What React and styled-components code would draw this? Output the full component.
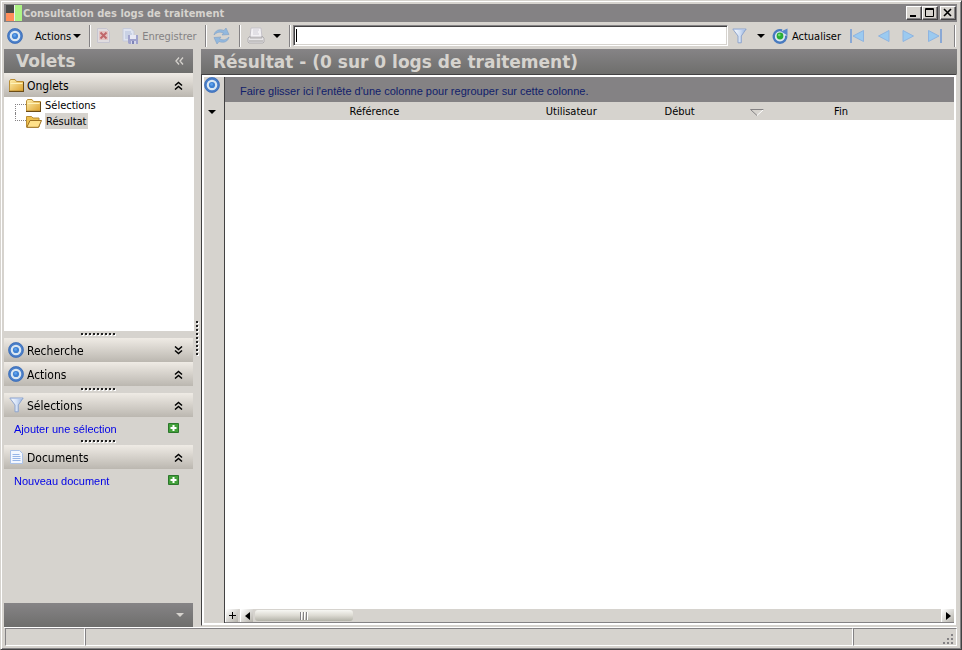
import React, { useState } from "react";
import styled, { createGlobalStyle } from "styled-components";

const GlobalStyle = createGlobalStyle`
    * {
        box-sizing: border-box;
    }
    body {
        margin: 0;
        background: #d6d3ce;
        color: #000;
        font-family: "DejaVu Sans Condensed", "DejaVu Sans", sans-serif;
        font-size: 11px;
        line-height: 14px;
    }
    button, input {
        font: inherit;
        color: inherit;
    }
`;

const Window = styled.div`
    display: flex;
    flex-direction: column;
    min-height: 100vh;
    border: 1px solid;
    border-color: #d6d3ce #424142 #424142 #d6d3ce;
    box-shadow: inset 1px 1px #fff, inset -1px -1px #848284;
    padding: 3px 4px 3px 3px;
`;

const TitleBar = styled.header`
    display: flex;
    align-items: center;
    height: 18px;
    padding: 0 1px 0 2px;
    background: #848284;
    color: #d6d3ce;
`;

const Title = styled.h1`
    flex: 1;
    margin: 0 0 0 1px;
    padding-top: 2px;
    font-size: 11px;
    font-weight: bold;
    white-space: nowrap;
`;

const WindowButton = styled.button`
    display: flex;
    width: 16px;
    height: 14px;
    margin-left: ${(props) => (props.$spaced ? "2px" : "0")};
    padding: 0;
    border: 1px solid;
    border-color: #fff #424142 #424142 #fff;
    box-shadow: inset -1px -1px #848284;
    background: #d6d3ce;
`;

const ToolBar = styled.div`
    display: flex;
    align-items: center;
    height: 27px;
    padding: 0 1px 0 3px;
`;

const ToolButton = styled.button`
    display: flex;
    align-items: center;
    flex: none;
    gap: ${(props) => props.$gap || 4}px;
    height: 22px;
    margin-left: ${(props) => props.$before || 0}px;
    padding: 0;
    border: 0;
    background: none;
    white-space: nowrap;

    &:disabled {
        color: #848284;
    }
`;

const ToolLabel = styled.span`
    padding-top: 2px;
`;

const Separator = styled.span`
    flex: none;
    width: 2px;
    height: 22px;
    margin: 0 ${(props) => props.$after ?? 6}px 0 ${(props) => props.$before || 8}px;
    border-left: 1px solid #848284;
    border-right: 1px solid #fff;
`;

const SearchInput = styled.input`
    flex: 1;
    min-width: 0;
    height: 21px;
    margin: 0 4px 1px 0;
    padding: 0 2px;
    border: 1px solid;
    border-color: #848284 #fff #fff #848284;
    box-shadow: inset 1px 1px #424142, inset -1px -1px #d6d3ce;
    background: #fff;
    outline: none;

    &:focus {
        caret-color: ${(props) => (props.$empty ? "transparent" : "#000")};
        background: #fff linear-gradient(#000, #000) no-repeat 2px 3px / ${(props) => (props.$empty ? "1px" : "0")} 13px;
    }
`;

const Body = styled.div`
    display: flex;
    flex: 1;
`;

const Sidebar = styled.aside`
    display: flex;
    flex-direction: column;
    flex: none;
    width: 189px;
`;

const Banner = styled.div`
    display: flex;
    align-items: center;
    justify-content: space-between;
    flex: none;
    height: ${(props) => props.$height || 24}px;
    padding: 0 9px 0 12px;
    background: linear-gradient(#868486, #6e6e6c);
    color: #d6d3ce;
`;

const BannerTitle = styled.h2`
    margin: 0;
    font-family: "DejaVu Sans", sans-serif;
    font-size: 17px;
    line-height: 24px;
    white-space: nowrap;
`;

const PlainButton = styled.button`
    display: flex;
    align-items: center;
    justify-content: center;
    padding: 0;
    border: 0;
    background: none;
`;

const PaneHeader = styled.button`
    display: flex;
    align-items: center;
    flex: none;
    gap: 3px;
    width: 100%;
    height: 24px;
    padding: 0 10px 0 4px;
    border: 0;
    background: linear-gradient(#efebe5, #bbb7b0);
    font-size: 12px;
    text-align: left;
`;

const PaneIcon = styled.span`
    display: flex;
    justify-content: center;
    width: 16px;
`;

const PaneLabel = styled.span`
    flex: 1;
    padding-top: 2px;
`;

const Tree = styled.ul`
    height: 234px;
    width: 190px;
    margin: 0;
    padding: 0 0 0 11px;
    background: #fff;
    list-style: none;
`;

const TreeItem = styled.li`
    display: flex;
    align-items: center;
    height: 16px;
`;

const TreeLine = styled.span`
    align-self: flex-start;
    width: 11px;
    height: 8px;
    border-left: 1px dotted #848284;
    border-bottom: 1px dotted #848284;

    ${TreeItem}:first-child & {
        align-self: flex-end;
        height: 9px;
        border-top: 1px dotted #848284;
        border-bottom: 0;
    }
`;

const TreeLink = styled.a`
    margin-left: 3px;
    padding: 2px 2px 0 1px;
    background: ${(props) => (props.$selected ? "#d6d3ce" : "none")};
    color: #000;
    text-decoration: none;
`;

const Splitter = styled.div`
    display: flex;
    align-items: center;
    justify-content: center;
    flex: none;
    height: 7px;
`;

const SideSplitter = styled.div`
    display: flex;
    align-items: center;
    justify-content: center;
    flex: none;
    width: 8px;
`;

const ActionRow = styled.div`
    display: flex;
    align-items: center;
    justify-content: space-between;
    height: 21px;
    padding: 0 14px 0 10px;
`;

const ActionLink = styled.a`
    padding-top: 2px;
    color: #0000e6;
    font-family: "Liberation Sans", Arial, sans-serif;
    text-decoration: none;
`;

const Spacer = styled.div`
    flex: 1;
`;

const Main = styled.main`
    display: flex;
    flex-direction: column;
    flex: 1;
    min-width: 0;
`;

const ResultFrame = styled.div`
    display: flex;
    flex: 1;
    padding: 2px;
    border: 1px solid;
    border-color: #424142 #d6d3ce #d6d3ce #424142;
    margin-bottom: 1px;
    background: #fff;
`;

const Gutter = styled.div`
    display: flex;
    flex-direction: column;
    align-items: center;
    flex: none;
    gap: 17px;
    width: 21px;
    padding: 0 4px 0 0;
    border-right: 1px solid #424142;
    background: #d6d3ce;
`;

const Grid = styled.div`
    display: flex;
    flex-direction: column;
    flex: 1;
    min-width: 0;
`;

const GroupPanel = styled.div`
    height: 25px;
    padding: 7px 15px 0;
    background: #848284;
    color: #10206b;
    font-family: "Liberation Sans", Arial, sans-serif;
    white-space: nowrap;
`;

const Table = styled.table`
    width: 100%;
    table-layout: fixed;
    border-collapse: collapse;
    background: #d6d3ce;
`;

const Th = styled.th`
    width: ${(props) => (props.$width ? props.$width + "%" : "auto")};
    height: 18px;
    padding: 2px 0 0;
    font-weight: normal;
    text-align: center;
`;

const ThContent = styled.div`
    display: flex;
    align-items: center;
    justify-content: flex-end;
    gap: 55px;
    padding-right: 8px;
`;

const ScrollBar = styled.div`
    display: flex;
    height: 14px;
    margin-top: auto;
    border-bottom: 1px solid #848284;
    background: #d6d3ce;
`;

const ScrollButton = styled(PlainButton)`
    flex: none;
    width: 13px;
    margin-left: ${(props) => (props.$spaced ? "2px" : "0")};
    border-left: 1px solid #fff;
    background: linear-gradient(135deg, #fff, #b5b2aa);
`;

const Thumb = styled.div`
    display: flex;
    align-items: center;
    justify-content: center;
    width: 98px;
    height: 11px;
    margin: 1px auto 0 2px;
    border-radius: 3px;
    background: linear-gradient(#f7f7f3, #dcdad2 50%, #b3b2a8);
`;

const StatusBar = styled.footer`
    display: flex;
    height: 19px;
    border-top: 1px solid #fff;
`;

const StatusCell = styled.div`
    display: flex;
    align-items: flex-end;
    justify-content: flex-end;
    flex: ${(props) => (props.$width ? "none" : "1")};
    width: ${(props) => (props.$width ? props.$width + "px" : "auto")};
    margin-left: ${(props) => (props.$first ? "1px" : "0")};
    padding-right: 2px;
    border: 1px solid;
    border-color: #848284 #fff #fff #848284;
`;

const Icon = styled.svg`
    display: block;
    flex: none;
`;

const Logo = () => (
    <Icon width="16" height="16" viewBox="0 0 16 16">
        <path d="M0 0h8v8H0z" fill="#484a48" />
        <path d="M0 8h8v8H0z" fill="#ff8e5a" />
        <path d="M9 0h7v16H9z" fill="#adf384" />
        <path d="M8.5 0v16" stroke="#eee" />
    </Icon>
);

const TargetIcon = () => (
    <Icon width="16" height="16" viewBox="0 0 16 16">
        <circle cx="8" cy="8" r="6.5" fill="#dbe7f1" stroke="#4a7fc9" strokeWidth="2.4" />
        <circle cx="8" cy="8" r="7.4" fill="none" stroke="#3765ad" strokeWidth=".6" />
        <circle cx="8" cy="8" r="3.1" fill="#3f81d2" />
        <circle cx="7.6" cy="7.4" r="1.4" fill="#5fa3ee" />
    </Icon>
);

const CaretDown = ({ color = "#000" }) => (
    <Icon width="8" height="4" viewBox="0 0 8 4">
        <path d="M0 0h8L4 4z" fill={color} />
    </Icon>
);

const DeleteIcon = () => (
    <Icon width="13" height="15" viewBox="0 0 13 15">
        <path d="M.5.5h9l3 3v11H.5z" fill="#e0dcdf" stroke="#c6c5d0" />
        <path d="M2 3h9v9H2z" fill="#e2c3c2" />
        <path d="m3.5 4.5 6 6m0-6-6 6" stroke="#c0676b" strokeWidth="2" />
    </Icon>
);

const SaveIcon = () => (
    <Icon width="16" height="16" viewBox="0 0 16 16">
        <path d="M1 .5h8l3 3V13H1z" fill="#dfe4f0" stroke="#c6cad9" />
        <path d="M3 4h6M3 6h7M3 8h6M3 10h4" stroke="#b3bfda" />
        <path d="M6 7h10v9H7l-1-1z" fill="#a0a3cc" />
        <path d="M8 7h6v4H8z" fill="#e8e9f4" />
        <path d="M9 13h5v3H9z" fill="#d4d6e8" />
        <path d="M10 13h2v3h-2z" fill="#7f84b6" />
    </Icon>
);

const RefreshIcon = () => (
    <Icon width="17" height="16" viewBox="0 0 17 16">
        <path d="M1 7C2 2.500 6 .5 11 2.500L13 0l3 6.500L9 7l1.500-2C7 3.500 4 4 1 7z" fill="#92b8de" stroke="#7f9fc4" strokeWidth=".6" />
        <path d="M16 9c-1 4.500-5 6.500-10 4.500L4 16 1 9.500 8 9l-1.500 2c3.500 1.500 6.500 1 9.500-2z" fill="#92b8de" stroke="#7f9fc4" strokeWidth=".6" />
    </Icon>
);

const PrinterIcon = () => (
    <Icon width="18" height="17" viewBox="0 0 18 17">
        <path d="M4 1h10l1 9H3z" fill="#f3f1f4" stroke="#c5c2c8" />
        <path d="M6 3h6M6 5h5M6 7h6" stroke="#d0ced6" />
        <path d="m3 9-2 2v4l1 1h14l1-1v-4l-2-2v2H3z" fill="#e8e6e8" stroke="#b0aeb0" />
        <path d="M2 13h14v2H2z" fill="#c4c2c2" />
    </Icon>
);

const FilterIcon = () => (
    <Icon width="15" height="16" viewBox="0 0 15 16">
        <defs>
            <linearGradient id="funnel">
                <stop offset="0" stopColor="#fff" />
                <stop offset=".5" stopColor="#d5e2f6" />
                <stop offset="1" stopColor="#93b0dc" />
            </linearGradient>
        </defs>
        <path d="M.8 1h13.400L9.300 8v6.800H6V8z" fill="url(#funnel)" stroke="#8fa5cd" />
        <path d="M2 1.500h11" stroke="#b2c4e6" />
    </Icon>
);

const ReloadIcon = () => (
    <Icon width="16" height="16" viewBox="0 0 16 16">
        <circle cx="8" cy="8.500" r="6.400" fill="#dbe7f1" />
        <path d="M10 2.500A6.300 6.300 0 1 0 14.200 7.500" fill="none" stroke="#487abf" strokeWidth="2.400" />
        <path d="m9 3.500 6.500-3V7.500z" fill="#5687ca" />
        <circle cx="8" cy="8" r="3.400" fill="#28ad35" />
        <circle cx="7.300" cy="7" r="1.300" fill="#76dc75" />
    </Icon>
);

const NavIcon = ({ flip, bar }) => (
    <Icon width={bar ? 16 : 13} height="14" viewBox={bar ? "0 0 16 14" : "0 0 13 14"}>
        <g transform={flip ? `translate(${bar ? 16 : 13} 0) scale(-1 1)` : undefined}>
            {bar && <path d="M2 0v14" stroke="#8aa8d4" strokeWidth="2" />}
            <path d={bar ? "M14.5 1.5v11L4 7z" : "M12 1.5v11L1.5 7z"} fill="#9bcaf0" stroke="#8fb4e0" />
        </g>
    </Icon>
);

const FolderIcon = () => (
    <Icon width="15" height="13" viewBox="0 0 15 13">
        <defs>
            <linearGradient id="folder" x2="1" y2="1">
                <stop offset="0" stopColor="#fff0ae" />
                <stop offset="1" stopColor="#dda12e" />
            </linearGradient>
        </defs>
        <path d="M.5 2 1.500.5h4.500L7.500 2.500h7v9.500H.5z" fill="url(#folder)" stroke="#b98d35" />
        <path d="M1.500 4.500h12" stroke="#fff2b9" />
        <path d="M0 12.500h15M14.500 3v10" stroke="#6b4c16" />
    </Icon>
);

const OpenFolderIcon = () => (
    <Icon width="16" height="13" viewBox="0 0 16 13">
        <path d="M.5 12V1.500h5L7 3h6v9z" fill="#edbf4d" stroke="#b98d35" />
        <path d="M.8 12.300 4 5.500h11.500L12.500 12.300z" fill="#ffe18a" stroke="#9c7021" />
    </Icon>
);

const DocumentIcon = () => (
    <Icon width="13" height="14" viewBox="0 0 13 14">
        <path d="M.5.5h9l3 3v10H.5z" fill="#f3f7ff" stroke="#abc2e8" />
        <path d="M2.500 4.500h7M2.500 6.500h8M2.500 8.500h8M2.500 10.500h8" stroke="#96b5e8" />
    </Icon>
);

const Chevrons = ({ down }) => (
    <Icon width="9" height="9" viewBox="0 0 9 9">
        <path
            d={down ? "m1 .5 3.5 3L8 .5M1 4.5l3.5 3 3.5-3" : "M1 4.5l3.5-3 3.5 3M1 8.5l3.5-3 3.5 3"}
            fill="none"
            stroke="#000"
            strokeWidth="1.5"
        />
    </Icon>
);

const AddIcon = () => (
    <Icon width="11" height="10" viewBox="0 0 11 10">
        <path d="M.5.5h10v9H.5z" fill="#42a039" stroke="#2c762c" />
        <path d="M5.5 2v6M2.5 5h6" stroke="#fff" strokeWidth="2" />
    </Icon>
);

const Dots = ({ vertical }) => (
    <Icon width={vertical ? 3 : 35} height={vertical ? 35 : 3}>
        {Array.from({ length: 9 }, (_, i) => (
            <g key={i} transform={vertical ? `translate(0 ${i * 4})` : `translate(${i * 4} 0)`}>
                <path d="M1 1h2v2H1z" fill="#fff" />
                <path d="M0 0h2v2H0z" fill="#222" />
            </g>
        ))}
    </Icon>
);

const Pane = ({ label, icon, down, onClick }) => (
    <PaneHeader onClick={onClick}>
        <PaneIcon>{icon}</PaneIcon>
        <PaneLabel>{label}</PaneLabel>
        <Chevrons down={down} />
    </PaneHeader>
);

const App = () => {
    const [query, setQuery] = useState("");
    const [selected, setSelected] = useState("Résultat");

    return (
        <Window>
            <GlobalStyle />
            <TitleBar>
                <Logo />
                <Title>Consultation des logs de traitement</Title>
                <WindowButton aria-label="Réduire">
                    <Icon width="14" height="12">
                        <path d="M3 8h6v2H3z" />
                    </Icon>
                </WindowButton>
                <WindowButton aria-label="Agrandir">
                    <Icon width="14" height="12">
                        <path d="M2.5 1.5h8v8h-8zM2 2.5h9" fill="none" stroke="#000" />
                    </Icon>
                </WindowButton>
                <WindowButton aria-label="Fermer" $spaced>
                    <Icon width="14" height="12">
                        <path d="m3 2 7 7m0-7-7 7" stroke="#000" strokeWidth="1.6" />
                    </Icon>
                </WindowButton>
            </TitleBar>

            <ToolBar>
                <ToolButton aria-label="Cible">
                    <TargetIcon />
                </ToolButton>
                <ToolButton $before={12} $gap={2}>
                    <ToolLabel>Actions</ToolLabel>
                    <CaretDown />
                </ToolButton>
                <Separator />
                <ToolButton disabled aria-label="Supprimer">
                    <DeleteIcon />
                </ToolButton>
                <ToolButton disabled $before={12}>
                    <SaveIcon />
                    <ToolLabel>Enregistrer</ToolLabel>
                </ToolButton>
                <Separator />
                <ToolButton aria-label="Rafraîchir">
                    <RefreshIcon />
                </ToolButton>
                <Separator $before={9} />
                <ToolButton aria-label="Imprimer" $gap={8}>
                    <PrinterIcon />
                    <CaretDown />
                </ToolButton>
                <Separator $after={2} />
                <SearchInput
                    autoFocus
                    aria-label="Recherche"
                    value={query}
                    $empty={query === ""}
                    onChange={(e) => setQuery(e.target.value)}
                />
                <ToolButton aria-label="Filtrer" $gap={10}>
                    <FilterIcon />
                    <CaretDown />
                </ToolButton>
                <ToolButton $before={7}>
                    <ReloadIcon />
                    <ToolLabel>Actualiser</ToolLabel>
                </ToolButton>
                <ToolButton $before={8} aria-label="Premier">
                    <NavIcon bar />
                </ToolButton>
                <ToolButton $before={12} aria-label="Précédent">
                    <NavIcon />
                </ToolButton>
                <ToolButton $before={12} aria-label="Suivant">
                    <NavIcon flip />
                </ToolButton>
                <ToolButton $before={12} aria-label="Dernier">
                    <NavIcon flip bar />
                </ToolButton>
                <Separator $before={11} $after={0} />
            </ToolBar>

            <Body>
                <Sidebar>
                    <Banner>
                        <BannerTitle>Volets</BannerTitle>
                        <PlainButton aria-label="Masquer les volets">
                            <Icon width="9" height="8">
                                <path d="M4 .5 1 4l3 3.5M8 .5 5 4l3 3.5" fill="none" stroke="#d6d3ce" strokeWidth="1.3" />
                            </Icon>
                        </PlainButton>
                    </Banner>
                    <Pane label="Onglets" icon={<FolderIcon />} />
                    <Tree>
                        <TreeItem>
                            <TreeLine />
                            <FolderIcon />
                            <TreeLink
                                href="#selections"
                                $selected={selected === "Sélections"}
                                onClick={() => setSelected("Sélections")}
                            >
                                Sélections
                            </TreeLink>
                        </TreeItem>
                        <TreeItem>
                            <TreeLine />
                            <OpenFolderIcon />
                            <TreeLink
                                href="#resultat"
                                $selected={selected === "Résultat"}
                                onClick={() => setSelected("Résultat")}
                            >
                                Résultat
                            </TreeLink>
                        </TreeItem>
                    </Tree>
                    <Splitter>
                        <Dots />
                    </Splitter>
                    <Pane label="Recherche" icon={<TargetIcon />} down />
                    <Pane label="Actions" icon={<TargetIcon />} />
                    <Splitter>
                        <Dots />
                    </Splitter>
                    <Pane label="Sélections" icon={<FilterIcon />} />
                    <ActionRow>
                        <ActionLink href="#ajouter">Ajouter une sélection</ActionLink>
                        <PlainButton aria-label="Ajouter une sélection">
                            <AddIcon />
                        </PlainButton>
                    </ActionRow>
                    <Splitter>
                        <Dots />
                    </Splitter>
                    <Pane label="Documents" icon={<DocumentIcon />} />
                    <ActionRow>
                        <ActionLink href="#nouveau">Nouveau document</ActionLink>
                        <PlainButton aria-label="Nouveau document">
                            <AddIcon />
                        </PlainButton>
                    </ActionRow>
                    <Spacer />
                    <Banner>
                        <Spacer />
                        <PlainButton aria-label="Plus de volets">
                            <CaretDown color="#d6d3ce" />
                        </PlainButton>
                    </Banner>
                </Sidebar>

                <SideSplitter>
                    <Dots vertical />
                </SideSplitter>

                <Main>
                    <Banner $height={25}>
                        <BannerTitle>Résultat - (0 sur 0 logs de traitement)</BannerTitle>
                    </Banner>
                    <ResultFrame>
                        <Gutter>
                            <PlainButton aria-label="Cible">
                                <TargetIcon />
                            </PlainButton>
                            <PlainButton aria-label="Colonnes">
                                <CaretDown />
                            </PlainButton>
                        </Gutter>
                        <Grid>
                            <GroupPanel>
                                Faire glisser ici l'entête d'une colonne pour regrouper sur cette colonne.
                            </GroupPanel>
                            <Table>
                                <thead>
                                    <tr>
                                        <Th $width={41}>Référence</Th>
                                        <Th $width={13}>Utilisateur</Th>
                                        <Th $width={21}>
                                            <ThContent>
                                                Début
                                                <Icon width="14" height="7">
                                                    <path d="M13.5.5 7 6.5" stroke="#fff" />
                                                    <path d="M7 6.5.5.5h13" fill="none" stroke="#848284" />
                                                </Icon>
                                            </ThContent>
                                        </Th>
                                        <Th $width={19}>Fin</Th>
                                        <Th />
                                    </tr>
                                </thead>
                            </Table>
                            <ScrollBar>
                                <ScrollButton aria-label="Ajouter">
                                    <Icon width="7" height="7">
                                        <path d="M3.5 0v7M0 3.5h7" stroke="#000" />
                                    </Icon>
                                </ScrollButton>
                                <ScrollButton $spaced aria-label="Défiler à gauche">
                                    <Icon width="5" height="8">
                                        <path d="M5 0v8L0 4z" />
                                    </Icon>
                                </ScrollButton>
                                <Thumb>
                                    <Icon width="9" height="8">
                                        <path d="M.5 0v8M3.5 0v8M6.5 0v8" stroke="#848284" />
                                        <path d="M1.5 0v8M4.5 0v8M7.5 0v8" stroke="#fff" />
                                    </Icon>
                                </Thumb>
                                <ScrollButton aria-label="Défiler à droite">
                                    <Icon width="5" height="8">
                                        <path d="M0 0v8l5-4z" />
                                    </Icon>
                                </ScrollButton>
                            </ScrollBar>
                        </Grid>
                    </ResultFrame>
                </Main>
            </Body>

            <StatusBar>
                <StatusCell $first $width={80} />
                <StatusCell />
                <StatusCell $width={104}>
                    <Icon width="11" height="11">
                        <path
                            d="M8 0h2v2H8zM4 4h2v2H4zM8 4h2v2H8zM0 8h2v2H0zM4 8h2v2H4zM8 8h2v2H8z"
                            fill="#848284"
                        />
                    </Icon>
                </StatusCell>
            </StatusBar>
        </Window>
    );
};

export default App;
